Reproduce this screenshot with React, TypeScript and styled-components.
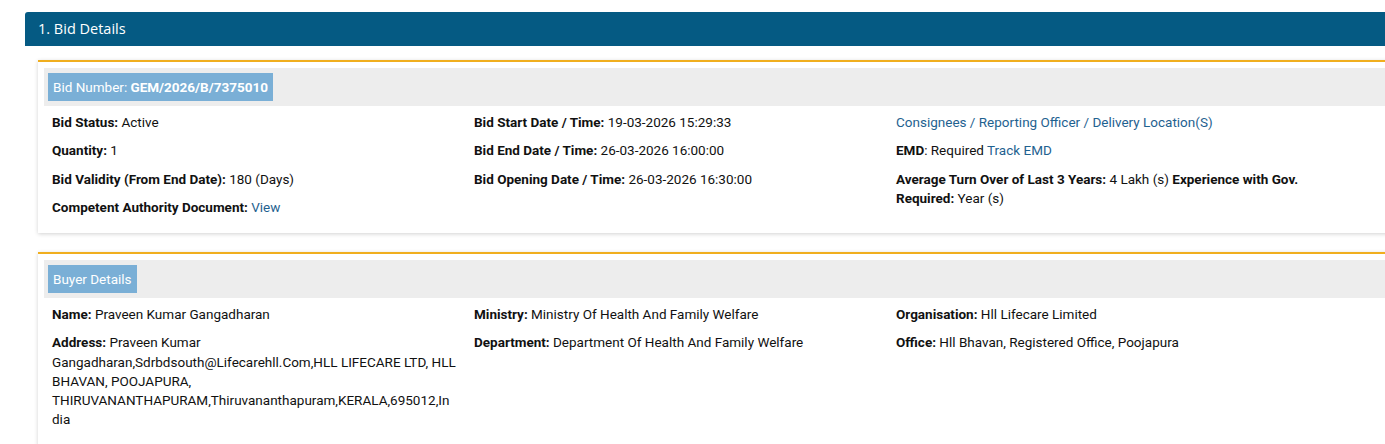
import styled, { createGlobalStyle } from "styled-components";

const GlobalStyle = createGlobalStyle`
  html, body {
    margin: 0;
    padding: 0;
    background: #fff;
    overflow: hidden;
  }
  body {
    font-family: Roboto, "Liberation Sans", Arial, sans-serif;
    font-size: 13.5px;
    color: #111;
  }
`;

const Page = styled.div`
  width: 1440px;
  padding: 12px 0 0 25px;
`;

const SectionHeader = styled.div`
  height: 34px;
  background: #055a83;
  border-radius: 3px 0 0 0;
  color: #fff;
  font-family: "Open Sans", "Liberation Sans", sans-serif;
  font-size: 14.5px;
  line-height: 34px;
  padding-left: 13px;
`;

const SectionBody = styled.div`
  padding: 14px 0 0 13px;
  display: flex;
  flex-direction: column;
  gap: 19px;
`;

const Card = styled.div`
  background: #fff;
  border-top: 2px solid #f0ae1e;
  box-shadow: 0 1px 4px rgba(0, 0, 0, 0.18);
  padding: 6px 0 7px 6px;
`;

const CardTitleBar = styled.div`
  background: #ededed;
  padding: 5px 4px;
`;

const Badge = styled.span`
  display: inline-block;
  background: #7aafd6;
  color: #fff;
  height: 28px;
  line-height: 28px;
  padding: 0 5px;
  font-size: 13.5px;
  b {
    font-weight: 700;
  }
`;

const Grid = styled.div`
  display: grid;
  grid-template-columns: 422px 422px 422px;
  padding: 7px 0 0 8px;
`;

const Col = styled.div`
  padding-right: 18px;
`;

const Item = styled.div`
  line-height: 19.25px;
  margin-bottom: 9px;
  overflow-wrap: break-word;
  word-break: break-word;
  b {
    font-weight: 700;
  }
`;

const Link = styled.a`
  color: #1f6290;
  text-decoration: none;
`;

const App = () => (
  <>
    <GlobalStyle />
    <Page>
      <SectionHeader>1. Bid Details</SectionHeader>
      <SectionBody>
        <Card>
          <CardTitleBar>
            <Badge>
              Bid Number: <b>GEM/2026/B/7375010</b>
            </Badge>
          </CardTitleBar>
          <Grid>
            <Col>
              <Item>
                <b>Bid Status:</b> Active
              </Item>
              <Item>
                <b>Quantity:</b> 1
              </Item>
              <Item>
                <b>Bid Validity (From End Date):</b> 180 (Days)
              </Item>
              <Item>
                <b>Competent Authority Document:</b> <Link>View</Link>
              </Item>
            </Col>
            <Col>
              <Item>
                <b>Bid Start Date / Time:</b> 19-03-2026 15:29:33
              </Item>
              <Item>
                <b>Bid End Date / Time:</b> 26-03-2026 16:00:00
              </Item>
              <Item>
                <b>Bid Opening Date / Time:</b> 26-03-2026 16:30:00
              </Item>
            </Col>
            <Col>
              <Item>
                <Link>Consignees / Reporting Officer / Delivery Location(S)</Link>
              </Item>
              <Item>
                <b>EMD</b>: Required <Link>Track EMD</Link>
              </Item>
              <Item>
                <b>Average Turn Over of Last 3 Years:</b> 4 Lakh (s){" "}
                <b>Experience with Gov. Required:</b> Year (s)
              </Item>
            </Col>
          </Grid>
        </Card>
        <Card>
          <CardTitleBar>
            <Badge>Buyer Details</Badge>
          </CardTitleBar>
          <Grid>
            <Col>
              <Item>
                <b>Name:</b> Praveen Kumar Gangadharan
              </Item>
              <Item>
                <b>Address:</b> Praveen Kumar
                Gangadharan,Sdrbdsouth@Lifecarehll.Com,HLL LIFECARE LTD, HLL
                BHAVAN, POOJAPURA,
                THIRUVANANTHAPURAM,Thiruvananthapuram,KERALA,695012,India
              </Item>
            </Col>
            <Col>
              <Item>
                <b>Ministry:</b> Ministry Of Health And Family Welfare
              </Item>
              <Item>
                <b>Department:</b> Department Of Health And Family Welfare
              </Item>
            </Col>
            <Col>
              <Item>
                <b>Organisation:</b> Hll Lifecare Limited
              </Item>
              <Item>
                <b>Office:</b> Hll Bhavan, Registered Office, Poojapura
              </Item>
            </Col>
          </Grid>
        </Card>
      </SectionBody>
    </Page>
  </>
);

export default App;
